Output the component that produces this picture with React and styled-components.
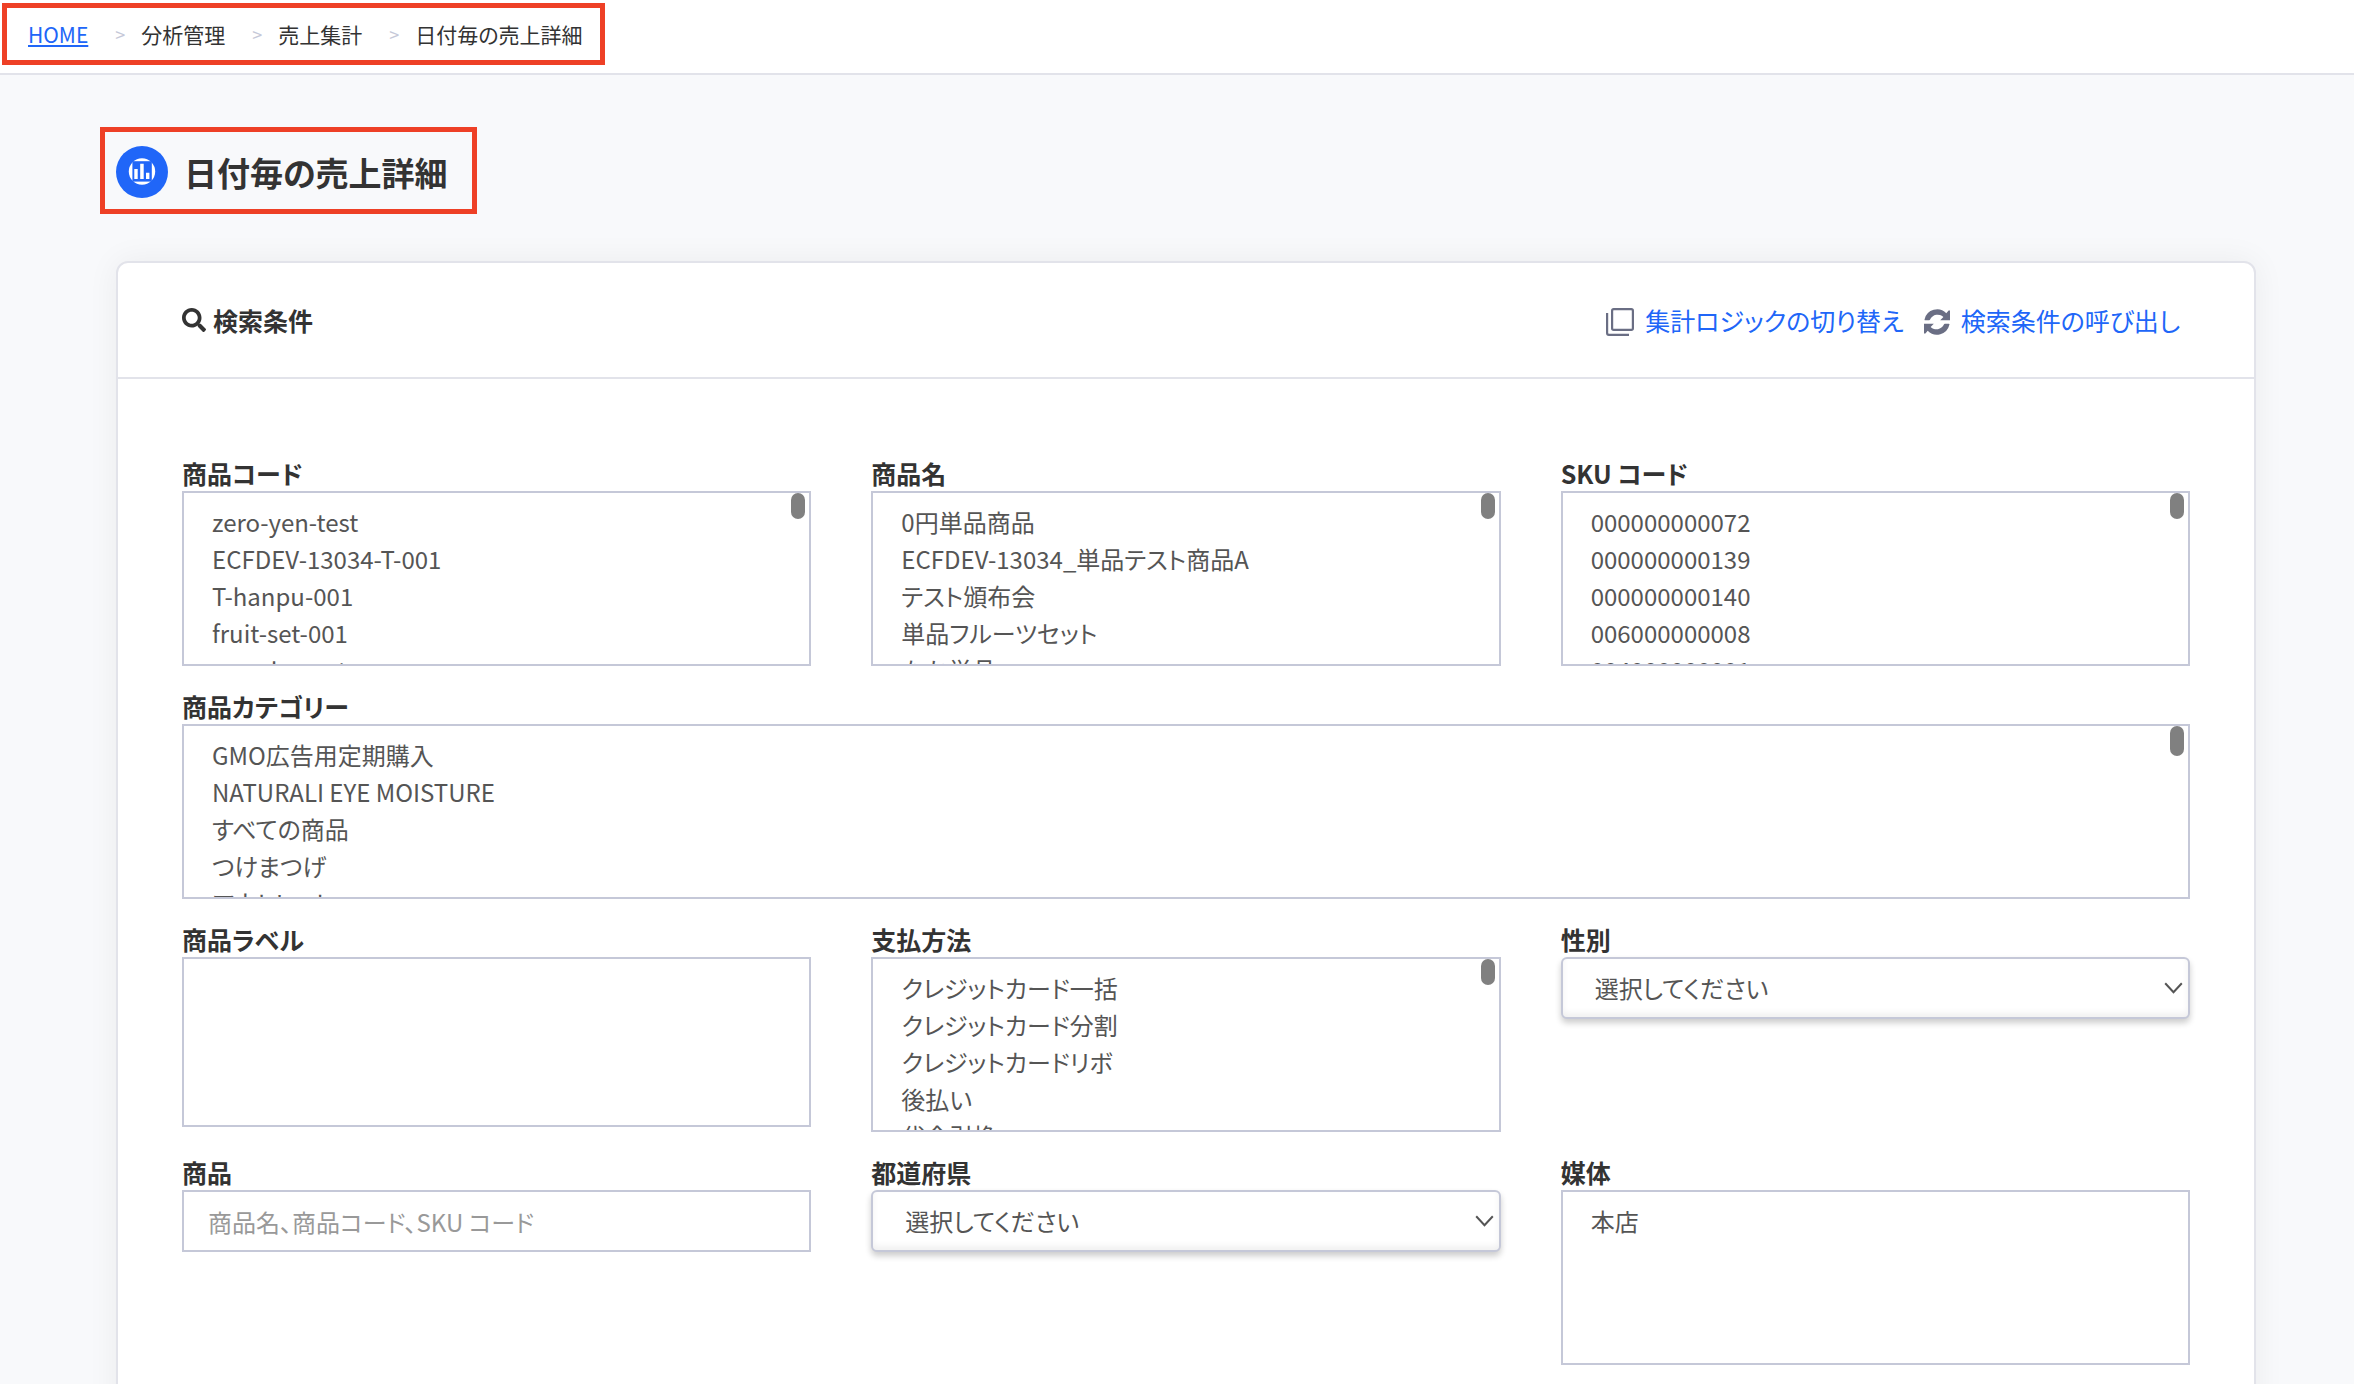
import styled, { createGlobalStyle } from 'styled-components';
import { FaSearch } from 'react-icons/fa';

const GlobalStyle = createGlobalStyle`
  * {
    box-sizing: border-box;
  }
  body {
    margin: 0;
    min-height: 100vh;
    background-color: #f8f9fb;
    color: #333;
    font-family: 'Noto Sans CJK JP', sans-serif;
    font-feature-settings: 'palt';
  }
  a {
    color: #2066f8;
  }
`;

const StyledBreadcrumb = styled.nav`
  padding: 3px 2px 8px;
  background-color: #fff;
  border-bottom: 2px solid #e2e3ea;

  ol {
    display: inline-flex;
    gap: 23px;
    height: 62px;
    margin: 0;
    padding: 0 17px 0 21px;
    align-items: center;
    border: 5px solid #ee4026;
    list-style: none;
    font-size: 21px;
    line-height: 30px;
  }
  li {
    display: flex;
    align-items: center;
  }
  li + li::before {
    content: '>';
    margin: 0 16px 0 4px;
    color: #c5c8d8;
    font-size: 18px;
  }
`;

const StyledMain = styled.main`
  padding: 52px 98px 0 116px;
  height: calc(100vh - 75px);
  overflow: hidden;
`;

const StyledTitle = styled.div`
  display: inline-flex;
  gap: 16px;
  align-items: center;
  height: 87px;
  margin-left: -16px;
  padding: 2px 24px 0 11px;
  border: 5px solid #ee4026;

  h1 {
    margin: 0;
    font-size: 33px;
    line-height: 48px;
    font-weight: 700;
  }
`;

const StyledCard = styled.section`
  margin-top: 47px;
  background-color: #fff;
  border: 2px solid #e2e3ea;
  border-radius: 12px;
  box-shadow: 0 0 32px rgba(0, 40, 40, 0.06);
`;

const StyledCardHeader = styled.header`
  display: flex;
  justify-content: space-between;
  align-items: center;
  height: 116px;
  padding: 0 74px 0 64px;
  border-bottom: 2px solid #e2e3ea;

  h2 {
    display: flex;
    gap: 7px;
    align-items: center;
    margin: 0;
    font-size: 25px;
    line-height: 36px;
    font-weight: 700;
  }
`;

const StyledActions = styled.div`
  display: flex;
  gap: 20px;
`;

const StyledAction = styled.a`
  display: flex;
  gap: 11px;
  align-items: center;
  font-size: 25px;
  line-height: 36px;
  text-decoration: none;

  svg {
    margin-top: 4px;
    color: #6a6e84;
  }
`;

const StyledForm = styled.form`
  display: grid;
  grid-template-columns: repeat(3, minmax(0, 1fr));
  gap: 22px 60px;
  align-items: start;
  padding: 76px 64px 60px;
`;

const StyledField = styled.div`
  grid-column: ${({ $wide }) => ($wide ? '1 / -1' : 'auto')};

  label {
    display: block;
    height: 36px;
    font-size: 25px;
    line-height: 36px;
    font-weight: 700;
  }
`;

const StyledControl = styled.div`
  position: relative;
  display: flex;
`;

const StyledListBox = styled.select`
  width: 100%;
  height: ${({ $empty }) => ($empty ? '170px' : '175px')};
  padding: 11px 28px 0;
  overflow: auto;
  appearance: none;
  background-color: #fff;
  border: 2px solid #c5c8d8;
  border-radius: 0;
  outline: none;
  font: 24px/37px 'Noto Sans CJK JP', sans-serif;
  font-feature-settings: 'palt';
  scrollbar-width: none;

  option {
    height: 37px;
    padding: 0;
    color: #555;
    font: 24px/37px 'Noto Sans CJK JP', sans-serif;
    font-feature-settings: 'palt';
  }
`;

const StyledThumb = styled.span`
  position: absolute;
  top: 2px;
  right: 6px;
  width: 14px;
  height: ${({ $wide }) => ($wide ? '30px' : '26px')};
  border-radius: 7px;
  background-color: #808080;
`;

const StyledSelect = styled.select`
  width: 100%;
  height: 62px;
  padding: 0 60px 0 32px;
  appearance: none;
  background-color: #fff;
  border: 2px solid #c5c8d8;
  border-radius: 6px;
  box-shadow: 0 4px 6px rgba(0, 0, 0, 0.2), inset 0 -4px 6px rgba(0, 0, 0, 0.06);
  color: #555;
  font: 24px/36px 'Noto Sans CJK JP', sans-serif;
  font-feature-settings: 'palt';
`;

const StyledChevron = styled.svg`
  position: absolute;
  top: 25px;
  right: 7px;
  width: 19px;
  height: 12px;
  pointer-events: none;
`;

const StyledInput = styled.input`
  width: 100%;
  height: 62px;
  padding: 0 24px;
  border: 2px solid #c5c8d8;
  border-radius: 0;
  color: #555;
  font: 24px/36px 'Noto Sans CJK JP', sans-serif;
  font-feature-settings: 'palt';

  &::placeholder {
    color: #999;
  }
`;

const ChartIcon = () => (
  <svg width="52" height="52" viewBox="0 0 52 52">
    <circle cx="26" cy="26" r="26" fill="#2066f8" />
    <circle cx="26" cy="25.5" r="13.2" fill="#fff" />
    <path fill="#2066f8" d="M16.4 15.2h19.4v20.4H16.4z" />
    <path fill="#fff" d="M18.3 23h3.4v10h-3.4zM24.2 17.8h3.5V33h-3.5zM30 26.8h3.4V33H30z" />
  </svg>
);

const CopyIcon = () => (
  <svg width="28" height="28" viewBox="0 0 28 28" fill="none" stroke="currentColor" strokeWidth="2.2">
    <rect x="6.1" y="1.1" width="20.8" height="20.8" rx="1.6" />
    <path d="M1.1 5v20.1a1.8 1.8 0 0 0 1.8 1.8H23" />
  </svg>
);

const RefreshIcon = () => (
  <svg width="26" height="26" viewBox="0 0 26 26" fill="currentColor">
    <path d="M26 1.6V11.2H16.2L19.4 7.9A8.4 8.4 0 0 0 6.1 10.4a1.2 1.2 0 0 1-1 .8H1.3a.7.7 0 0 1-.7-.9A12.9 12.9 0 0 1 22.3 4.2L24.6 1.6z" />
    <path d="M0 24.4V14.8H9.8L6.6 18.1A8.4 8.4 0 0 0 19.9 15.6a1.2 1.2 0 0 1 1-.8H24.7a.7.7 0 0 1 .7.9A12.9 12.9 0 0 1 3.7 21.8L1.4 24.4z" />
  </svg>
);

const ListField = ({ id, label, options = [], wide }) => (
  <StyledField $wide={wide}>
    <label htmlFor={id}>{label}</label>
    <StyledControl>
      <StyledListBox id={id} multiple $empty={options.length === 0}>
        {options.map((option) => (
          <option key={option}>{option}</option>
        ))}
      </StyledListBox>
      {options.length > 4 && <StyledThumb $wide={wide} />}
    </StyledControl>
  </StyledField>
);

const SelectField = ({ id, label }) => (
  <StyledField>
    <label htmlFor={id}>{label}</label>
    <StyledControl>
      <StyledSelect id={id}>
        <option>選択してください</option>
      </StyledSelect>
      <StyledChevron viewBox="0 0 19 12" fill="none" stroke="#555" strokeWidth="2">
        <path d="M1.2 1.2 9.5 10.2 17.8 1.2" />
      </StyledChevron>
    </StyledControl>
  </StyledField>
);

const productCodes = ['zero-yen-test', 'ECFDEV-13034-T-001', 'T-hanpu-001', 'fruit-set-001', 'nma-hanset']
const productNames = ['0円単品商品', 'ECFDEV-13034_単品テスト商品A', 'テスト頒布会', '単品フルーツセット', 'なか単品']
const skuCodes = ['000000000072', '000000000139', '000000000140', '006000000008', '004000000001']
const categories = ['GMO広告用定期購入', 'NATURALI EYE MOISTURE', 'すべての商品', 'つけまつげ', 'アウトレット']
const payments = ['クレジットカード一括', 'クレジットカード分割', 'クレジットカードリボ', '後払い', '代金引換']

const App = () => {
  return (
    <>
      <GlobalStyle />
      <StyledBreadcrumb>
        <ol>
          <li><a href="#home">HOME</a></li>
          <li>分析管理</li>
          <li>売上集計</li>
          <li>日付毎の売上詳細</li>
        </ol>
      </StyledBreadcrumb>
      <StyledMain>
        <StyledTitle>
          <ChartIcon />
          <h1>日付毎の売上詳細</h1>
        </StyledTitle>
        <StyledCard>
          <StyledCardHeader>
            <h2><FaSearch size={24} />検索条件</h2>
            <StyledActions>
              <StyledAction href="#logic"><CopyIcon />集計ロジックの切り替え</StyledAction>
              <StyledAction href="#recall"><RefreshIcon />検索条件の呼び出し</StyledAction>
            </StyledActions>
          </StyledCardHeader>
          <StyledForm>
            <ListField id="code" label="商品コード" options={productCodes} />
            <ListField id="name" label="商品名" options={productNames} />
            <ListField id="sku" label="SKU コード" options={skuCodes} />
            <ListField id="category" label="商品カテゴリー" options={categories} wide />
            <ListField id="tag" label="商品ラベル" />
            <ListField id="payment" label="支払方法" options={payments} />
            <SelectField id="gender" label="性別" />
            <StyledField>
              <label htmlFor="product">商品</label>
              <StyledControl>
                <StyledInput id="product" type="text" placeholder="商品名、商品コード、SKU コード" />
              </StyledControl>
            </StyledField>
            <SelectField id="prefecture" label="都道府県" />
            <ListField id="media" label="媒体" options={['本店']} />
          </StyledForm>
        </StyledCard>
      </StyledMain>
    </>
  );
};

export default App;
